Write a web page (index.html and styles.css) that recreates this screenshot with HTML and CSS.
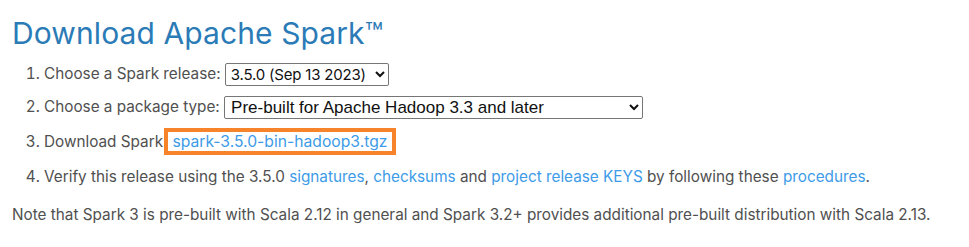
FILE: index.html
```html
<!DOCTYPE html>
<html lang="en">
<head>
  <meta charset="UTF-8" />
  <meta name="viewport" content="width=device-width, initial-scale=1.0"/>
  <title>Download Apache Spark</title>
  <link rel="stylesheet" href="styles.css">
</head>
<body>

  <h2 class="page-title">Download Apache Spark™</h2>

  <ol class="steps">
    <li>
      Choose a Spark release:
      <select class="release-select">
        <option>3.5.0 (Sep 13 2023)</option>
      </select>
    </li>
    <li>
      Choose a package type:
      <select class="package-select">
        <option>Pre-built for Apache Hadoop 3.3 and later</option>
      </select>
    </li>
    <li>
      Download Spark <span class="highlight"><a href="#">spark-3.5.0-bin-hadoop3.tgz</a></span>
    </li>
    <li>
      Verify this release using the 3.5.0 <a href="#">signatures</a>, <a href="#">checksums</a> and
      <a href="#">project release KEYS</a> by following these <a href="#">procedures</a>.
    </li>
  </ol>

  <p class="note">Note that Spark 3 is pre-built with Scala 2.12 in general and Spark 3.2+ provides additional pre-built distribution with Scala 2.13.</p>

</body>
</html>
```

FILE: styles.css
```css
body {
  margin: 0;
  padding: 0 12px;
  font-family: Inter, 'Open Sans', sans-serif;
  font-size: 15.3px;
  color: #505050;
  background: #fff;
}

a {
  color: #3d9be8;
  text-decoration: none;
}

.page-title {
  margin: 15px 0 6px;
  font-size: 30px;
  font-weight: 400;
  color: #2b7bb7;
  letter-spacing: 0.1px;
}

.steps {
  margin: 0;
  padding-left: 32px;
}

.steps li {
  line-height: 33px;
}

.steps li:nth-child(3) {
  line-height: 37px;
}

.release-select,
.package-select {
  color: #111;
  height: 23px;
  padding: 0 0 0 2px;
  border: 1px solid #767676;
  border-radius: 2px;
  background: #fff;
  vertical-align: middle;
}

.release-select {
  font-family: Inter, sans-serif;
  font-size: 15px;
  letter-spacing: -0.2px;
  padding-left: 1px;
  width: 164px;
}

.package-select {
  font-family: 'Liberation Sans', Arial, sans-serif;
  font-size: 17px;
  width: 419px;
}

.highlight {
  border: 4px solid #f7842a;
  margin-left: -3px;
  padding: 0 5px 0 4px;
}

.highlight a {
  font-size: 15.7px;
}

.note {
  margin: 12px 0 0;
  line-height: 20px;
}
```
